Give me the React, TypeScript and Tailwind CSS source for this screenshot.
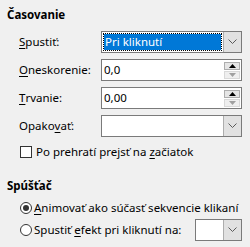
import React from "react";

function Chevron() {
  return (
    <svg width="9" height="6" viewBox="0 0 9 6" className="text-[#5a5a5a]">
      <path d="M0.5 0.5 L4.5 4.5 L8.5 0.5" fill="none" stroke="currentColor" strokeWidth="1" />
    </svg>
  );
}

function DropButton() {
  return (
    <div className="flex h-full w-[18px] items-center justify-center border-l border-[#adadad] bg-[#e1e1e1]">
      <Chevron />
    </div>
  );
}

function Spin() {
  return (
    <div className="mr-[1px] flex w-[16px] flex-col gap-[1px] py-[1px]">
      <div className="flex h-[8px] items-center justify-center border border-[#adadad] bg-[#e5e5e5]">
        <svg width="7" height="4" viewBox="0 0 7 4">
          <path d="M0 4 L3.5 0 L7 4 Z" fill="#000" />
        </svg>
      </div>
      <div className="flex h-[8px] items-center justify-center border border-[#d9d9d9] bg-[#efefef]">
        <svg width="7" height="4" viewBox="0 0 7 4">
          <path d="M0 0 L3.5 4 L7 0 Z" fill="#a0a0a0" />
        </svg>
      </div>
    </div>
  );
}

function U({ children }: { children: React.ReactNode }) {
  return <span className="underline underline-offset-2">{children}</span>;
}

export default function App() {
  return (
    <div
      className="h-[247px] w-[250px] overflow-hidden bg-[#f0f0f0] text-[11.5px] text-[#000]"
      style={{ fontFamily: '"Segoe UI", "Noto Sans", sans-serif' }}
    >
      <div className="pl-[7px] pt-[7px] font-bold leading-[16px]">Časovanie</div>

      <div className="mt-[8px] grid grid-cols-[82px_141px] gap-y-[6px] pl-[19px]">
        <div className="flex h-[22px] items-center">
          <U>S</U>pustiť:
        </div>
        <div className="flex h-[22px] border border-[#7a7a7a] bg-white">
          <div className="flex-1 bg-white p-[1px]">
            <div className="flex h-full items-center border border-dotted border-black bg-[#0078d7] bg-clip-padding pl-[1px] text-white">
              Pri kliknutí
            </div>
          </div>
          <DropButton />
        </div>

        <div className="flex h-[22px] items-center">
          <U>O</U>neskorenie:
        </div>
        <div className="flex h-[22px] items-center border border-[#7a7a7a] bg-white">
          <div className="flex-1 pl-[2px]">0,0</div>
          <Spin />
        </div>

        <div className="flex h-[22px] items-center">
          <U>T</U>rvanie:
        </div>
        <div className="flex h-[22px] items-center border border-[#7a7a7a] bg-white">
          <div className="flex-1 pl-[2px]">0,00</div>
          <Spin />
        </div>

        <div className="flex h-[22px] items-center">
          Opako<U>v</U>ať:
        </div>
        <div className="flex h-[22px] border border-[#7a7a7a] bg-white">
          <div className="flex-1" />
          <DropButton />
        </div>
      </div>

      <div className="mt-[9px] flex h-[12px] items-center pl-[20px]">
        <div className="h-[12px] w-[12px] border border-[#333] bg-white" />
        <span className="ml-[4px]">
          Po prehratí prejsť na <U>z</U>ačiatok
        </span>
      </div>

      <div className="mt-[20px] pl-[7px] font-bold leading-[16px]">Spúšťač</div>

      <div className="mt-[7px] flex h-[14px] items-center pl-[20px]">
        <div className="flex h-[12px] w-[12px] items-center justify-center rounded-full border border-[#333] bg-white">
          <div className="h-[6px] w-[6px] rounded-full bg-[#333]" />
        </div>
        <span className="ml-[2px]">
          <U>A</U>nimovať ako súčasť sekvencie klikaní
        </span>
      </div>

      <div className="mt-[4px] flex h-[22px] items-center pl-[20px]">
        <div className="h-[12px] w-[12px] rounded-full border border-[#333] bg-white" />
        <span className="ml-[2px]">
          Spustiť <U>e</U>fekt pri kliknutí na:
        </span>
        <div className="ml-auto mr-[8px] flex h-[22px] w-[47px] border border-[#7a7a7a] bg-white">
          <div className="flex-1" />
          <DropButton />
        </div>
      </div>
    </div>
  );
}
